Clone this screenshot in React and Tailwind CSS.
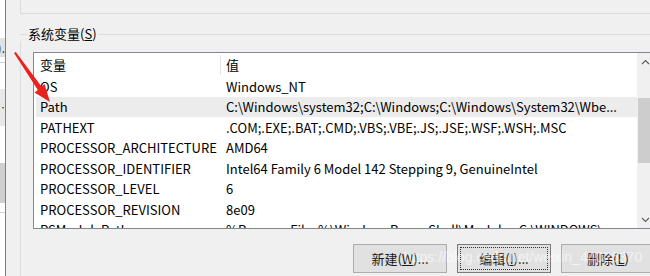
import React from "react";

const FONT = "font-['Microsoft_YaHei_UI','Noto_Sans_CJK_SC',sans-serif]";

const ROWS = [
  { name: "OS", value: "Windows_NT" },
  { name: "Path", value: "C:\\Windows\\system32;C:\\Windows;C:\\Windows\\System32\\Wbe...", selected: true },
  { name: "PATHEXT", value: ".COM;.EXE;.BAT;.CMD;.VBS;.VBE;.JS;.JSE;.WSF;.WSH;.MSC" },
  { name: "PROCESSOR_ARCHITECTURE", value: "AMD64" },
  { name: "PROCESSOR_IDENTIFIER", value: "Intel64 Family 6 Model 142 Stepping 9, GenuineIntel" },
  { name: "PROCESSOR_LEVEL", value: "6" },
  { name: "PROCESSOR_REVISION", value: "8e09" },
  { name: "PSModulePath", value: "%ProgramFiles%\\WindowsPowerShell\\Modules;C:\\WINDOWS\\..." },
];

const BUTTONS = [
  { id: "new", pre: "新建(", key: "W", post: ")..." },
  { id: "edit", pre: "编辑(", key: "I", post: ")...", focused: true },
  { id: "del", pre: "删除(", key: "L", post: ")" },
];

const Chevron = ({ down }) => (
  <svg width="9" height="6" viewBox="0 0 9 6" className="text-[#606060]">
    <path
      d={down ? "M1 1 L4.5 4.5 L8 1" : "M1 5 L4.5 1.5 L8 5"}
      fill="none"
      stroke="currentColor"
      strokeWidth="1.2"
    />
  </svg>
);

const Scrollbar = () => (
  <div className="w-[17px] shrink-0 bg-[#f0f0f0] flex flex-col">
    <div className="h-[17px] flex items-center justify-center">
      <Chevron />
    </div>
    <div className="flex-1 px-[1px] pt-[28px]">
      <div className="h-[65px] bg-[#cdcdcd]" />
    </div>
    <div className="h-[17px] flex items-center justify-center">
      <Chevron down />
    </div>
  </div>
);

const Row = ({ row }) => (
  <div
    className={`flex items-center h-[20.5px] shrink-0 whitespace-nowrap leading-[17px] ${
      row.selected ? "bg-[#ececec]" : ""
    }`}
  >
    <div className="w-[185px] shrink-0 pl-[4px] overflow-hidden">{row.name}</div>
    <div className="pl-[5px] overflow-hidden">{row.value}</div>
  </div>
);

const VarButton = ({ btn }) => (
  <button
    className={`w-[94px] h-[29px] shrink-0 bg-[#e1e1e1] border flex items-center justify-center text-[13px] text-[#1a1a1a] ${
      btn.focused ? "border-[#7a7a7a] p-[2px]" : "border-[#adadad]"
    }`}
  >
    <span
      className={`w-full h-full flex items-center justify-center ${
        btn.focused ? "border border-dotted border-[#333]" : ""
      }`}
    >
      {btn.pre}
      <span className="underline">{btn.key}</span>
      {btn.post}
    </span>
  </button>
);

export default function App() {
  return (
    <div className={`relative w-[650px] h-[276px] overflow-hidden bg-[#f0f0f0] flex text-black ${FONT}`}>
      {/* sliver of the window behind */}
      <div className="w-[6px] shrink-0 bg-white border-r border-[#3f8ed8] flex flex-col overflow-hidden text-[12px] leading-none text-[#333]">
        <div className="h-[38px]" />
        <div className="h-[19px] bg-[#e1e1e1] flex items-center justify-end">).</div>
        <div className="h-[5px]" />
        <div className="h-px bg-[#d0d0d0]" />
        <div className="h-[26px]" />
        <div className="h-[37px] bg-[#e8e8e8] flex items-center justify-end">…</div>
        <div className="h-[37px]" />
        <div className="h-[40px] bg-[#cfcfcf]" />
        <div className="h-[9px]" />
        <div className="h-px bg-[#d0d0d0]" />
      </div>

      <div className="flex-1 flex flex-col pl-[14px]">
        {/* bottom of the user variables group */}
        <div className="h-[14px] shrink-0 border-l border-b border-[#dcdcdc]" />

        {/* system variables group */}
        <div className="mt-[13px] flex items-center h-[14px] shrink-0">
          <div className="w-[7px] h-px bg-[#dcdcdc] self-center" />
          <span className="text-[13px] leading-[16px] px-[1px] whitespace-nowrap">
            系统变量(<span className="underline">S</span>)
          </span>
          <div className="flex-1 h-px bg-[#dcdcdc]" />
        </div>
        <div className="flex-1 border-l border-[#dcdcdc] pl-[12px] pt-[11px] flex flex-col">
          <div className="w-[622px] h-[177px] shrink-0 bg-white border border-[#828790] flex overflow-hidden text-[13px]">
            <div className="flex-1 flex flex-col pl-[2px] overflow-hidden">
              <div className="h-[23px] shrink-0 flex items-center leading-[17px]">
                <div className="w-[185px] h-[20px] shrink-0 pl-[4px] border-r border-[#e5e5e5] flex items-center">
                  变量
                </div>
                <div className="pl-[5px]">值</div>
              </div>
              {ROWS.map((row) => (
                <Row key={row.name} row={row} />
              ))}
            </div>
            <Scrollbar />
          </div>

          <div className="w-[622px] mt-[15px] flex justify-end gap-[10px]">
            {BUTTONS.map((btn) => (
              <VarButton key={btn.id} btn={btn} />
            ))}
          </div>
        </div>
      </div>

      {/* red annotation arrow */}
      <svg className="absolute left-0 top-0 pointer-events-none" width="70" height="120" viewBox="0 0 70 120">
        <polygon points="14,53 15.8,52 41.5,86.5 44.5,84 50,102 34.5,92.5 37.8,90" fill="#e8231e" />
      </svg>

      {/* csdn watermark */}
      <div className="absolute left-[404px] top-[250px] text-[14px] leading-none text-white/55 whitespace-nowrap font-['Liberation_Sans',sans-serif] pointer-events-none">
        https://blog.csdn.net/weixin_44026370
      </div>
    </div>
  );
}
